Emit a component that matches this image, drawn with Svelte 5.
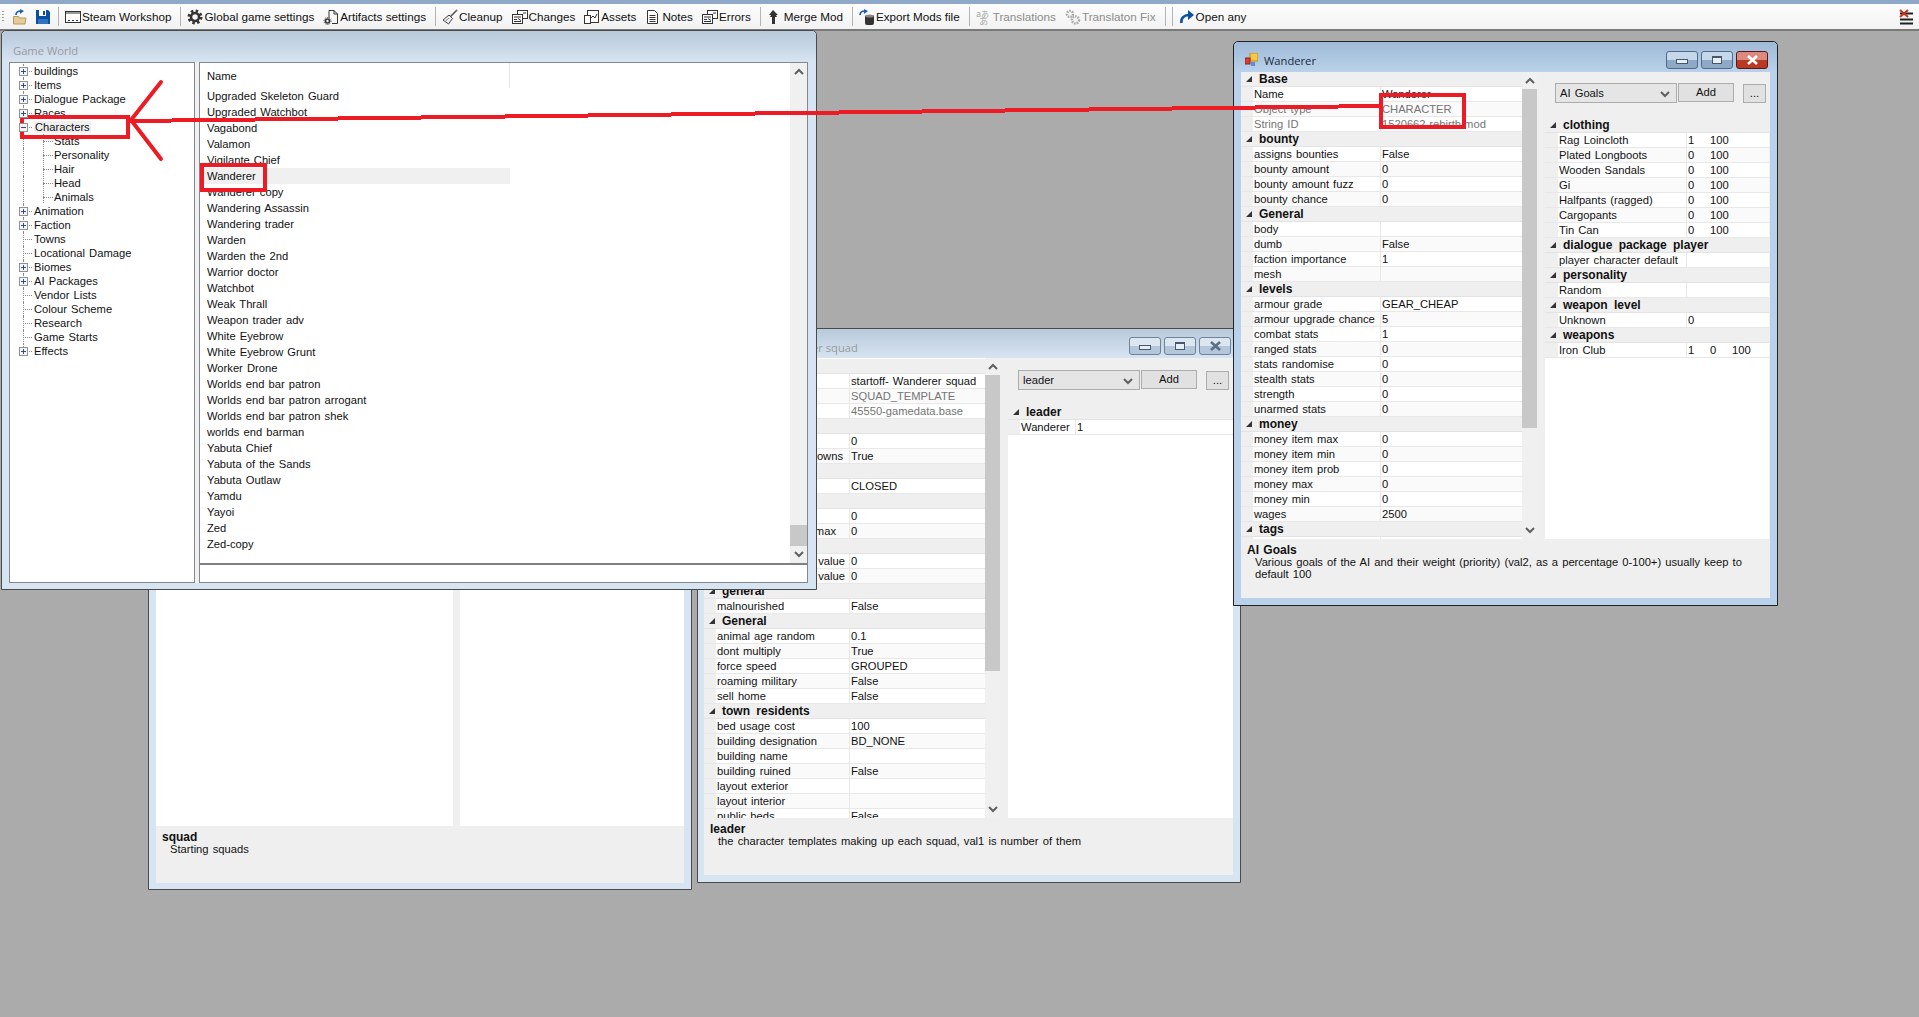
<script>
  const g = '#333';
  const icons = {
    open: `<path d="M1.500 7.500h5l1 1.500h6.500l-1 6h-11.500z" fill="#e6cb97" stroke="#b8975c"/><path d="M4 6c0-3 2-4 5-4" fill="none" stroke="#1d5fae" stroke-width="1.700"/><path d="M8 0l4 2-4 3z" fill="#1d5fae"/>`,
    save: `<path d="M1 1h12l2 2v12H1z" fill="#0b4f9e"/><rect x="4" y="1" width="7" height="6" fill="#fff"/><rect x="8" y="2" width="2" height="4" fill="#0b4f9e"/><rect x="3" y="10" width="10" height="5" fill="#2f73bd"/>`,
    workshop: `<rect x=".5" y="2.500" width="15" height="11" fill="#fff" stroke="${g}"/><rect x="1" y="3" width="14" height="2" fill="#999"/><path d="M3 11.500h2M7 11.500h2M11 11.500h2" stroke="${g}"/>`,
    gear: `<circle cx="8" cy="8" r="6" fill="none" stroke="${g}" stroke-width="3" stroke-dasharray="2.400 2.300"/><circle cx="8" cy="8" r="4" fill="none" stroke="${g}" stroke-width="2.500"/>`,
    artifacts: `<path d="M6 9V1.500h5l3.500 3.500v9.500H9" fill="none" stroke="${g}"/><path d="M11 1.500v3.500h3.500" fill="none" stroke="${g}"/><circle cx="4.500" cy="12" r="2" fill="none" stroke="${g}" stroke-width="1.600"/><circle cx="4.500" cy="12" r="3.500" fill="none" stroke="${g}" stroke-dasharray="1 1.200"/>`,
    broom: `<path d="M15 1 8 8" stroke="#555" stroke-width="1.600"/><path d="M7 6l3.500 3.500-4 5.500-5.500-4z" fill="#eee" stroke="#444"/><path d="M3.500 12 7 9" stroke="#888"/>`,
    changes: `<rect x="5.500" y="1.500" width="10" height="8" fill="#fff" stroke="${g}"/><rect x=".5" y="5.500" width="10" height="9" fill="#fff" stroke="${g}"/><path d="M2 8h7M2 10.500h3M2 12.500h7M11 4h3" stroke="${g}"/><path d="M6 9.500l3 2" stroke="${g}"/>`,
    assets: `<rect x="3.500" y="1.500" width="11" height="12" fill="#fff" stroke="${g}"/><rect x=".5" y="6.500" width="6" height="8" fill="#fff" stroke="${g}"/><path d="M6 10l3-3 2 2 2-4" fill="none" stroke="${g}"/>`,
    notes: `<path d="M2.500 1.500h7l3 3v10h-10z" fill="#fff" stroke="${g}"/><path d="M4.500 6.500h6M4.500 8.500h6M4.500 10.500h6M4.500 12.500h6" stroke="${g}"/>`,
    merge: `<path d="M6 1 2 6h2l-1 2h2v7h3V8h2L9 6h2z" fill="${g}"/>`,
    export: `<path d="M1 6c0-3 2-4 5-4" fill="none" stroke="#1d5fae" stroke-width="1.700"/><path d="M5 0l4 2-4 3z" fill="#1d5fae"/><rect x="6" y="6" width="9" height="10" rx="2" fill="#333"/><ellipse cx="10.500" cy="7" rx="4" ry="1.500" fill="#888"/>`,
    translate: `<text x="0" y="8" font-size="9" fill="#aaa" font-family="'Noto Sans CJK JP',sans-serif">a</text><text x="5" y="8" font-size="8" fill="#aaa" font-family="'Noto Sans CJK JP',sans-serif">あ</text><text x="3" y="16" font-size="9" fill="#aaa" font-family="'Noto Sans CJK JP',sans-serif">あ</text>`,
    fix: `<circle cx="5" cy="5" r="3" fill="none" stroke="#aaa" stroke-width="2.500" stroke-dasharray="1.600 1"/><circle cx="10.500" cy="11" r="3.500" fill="none" stroke="#aaa" stroke-width="2.500" stroke-dasharray="1.600 1"/>`,
    any: `<path d="M2.500 14c-1-5 3-8 7-8" fill="none" stroke="#0d4fa0" stroke-width="2.600"/><path d="M9 1l6 5-6 5z" fill="#0d4fa0"/>`
  };

  const tools = [
    { icon: 'open' }, { icon: 'save' }, { sep: true },
    { icon: 'workshop', label: 'Steam Workshop' }, { sep: true },
    { icon: 'gear', label: 'Global game settings' },
    { icon: 'artifacts', label: 'Artifacts settings' }, { sep: true },
    { icon: 'broom', label: 'Cleanup' },
    { icon: 'changes', label: 'Changes' },
    { icon: 'assets', label: 'Assets' },
    { icon: 'notes', label: 'Notes' },
    { icon: 'changes', label: 'Errors' }, { sep: true },
    { icon: 'merge', label: 'Merge Mod' }, { sep: true },
    { icon: 'export', label: 'Export Mods file' }, { sep: true },
    { icon: 'translate', label: 'Translations', off: true },
    { icon: 'fix', label: 'Translaton Fix', off: true }, { sep: true }, { sep: true },
    { icon: 'any', label: 'Open any' }
  ];

  const tree = [
    { t: 'buildings', box: '+' }, { t: 'Items', box: '+' }, { t: 'Dialogue Package', box: '+' },
    { t: 'Races', box: '+' }, { t: 'Characters', box: '-', on: true },
    { t: 'Stats', child: true }, { t: 'Personality', child: true }, { t: 'Hair', child: true },
    { t: 'Head', child: true }, { t: 'Animals', child: true, end: true },
    { t: 'Animation', box: '+' }, { t: 'Faction', box: '+' }, { t: 'Towns' },
    { t: 'Locational Damage' }, { t: 'Biomes', box: '+' }, { t: 'AI Packages', box: '+' },
    { t: 'Vendor Lists' }, { t: 'Colour Scheme' }, { t: 'Research' }, { t: 'Game Starts' },
    { t: 'Effects', box: '+', last: true }
  ];

  const names = [
    'Upgraded Skeleton Guard', 'Upgraded Watchbot', 'Vagabond', 'Valamon', 'Vigilante Chief',
    'Wanderer', 'Wanderer copy', 'Wandering Assassin', 'Wandering trader', 'Warden',
    'Warden the 2nd', 'Warrior doctor', 'Watchbot', 'Weak Thrall', 'Weapon trader adv',
    'White Eyebrow', 'White Eyebrow Grunt', 'Worker Drone', 'Worlds end bar patron',
    'Worlds end bar patron arrogant', 'Worlds end bar patron shek', 'worlds end barman',
    'Yabuta Chief', 'Yabuta of the Sands', 'Yabuta Outlaw', 'Yamdu', 'Yayoi', 'Zed', 'Zed-copy'
  ];

  const character = [
    { title: 'Base', rows: [
      { l: 'Name', v: ['Wanderer'] },
      { l: 'Object type', v: ['CHARACTER'], ro: true },
      { l: 'String ID', v: ['1520662-rebirth.mod'], ro: true }
    ] },
    { title: 'bounty', rows: [
      { l: 'assigns bounties', v: ['False'] }, { l: 'bounty amount', v: ['0'] },
      { l: 'bounty amount fuzz', v: ['0'] }, { l: 'bounty chance', v: ['0'] }
    ] },
    { title: 'General', rows: [
      { l: 'body', v: [''] }, { l: 'dumb', v: ['False'] },
      { l: 'faction importance', v: ['1'] }, { l: 'mesh', v: [''] }
    ] },
    { title: 'levels', rows: [
      { l: 'armour grade', v: ['GEAR_CHEAP'] }, { l: 'armour upgrade chance', v: ['5'] },
      { l: 'combat stats', v: ['1'] }, { l: 'ranged stats', v: ['0'] },
      { l: 'stats randomise', v: ['0'] }, { l: 'stealth stats', v: ['0'] },
      { l: 'strength', v: ['0'] }, { l: 'unarmed stats', v: ['0'] }
    ] },
    { title: 'money', rows: [
      { l: 'money item max', v: ['0'] }, { l: 'money item min', v: ['0'] },
      { l: 'money item prob', v: ['0'] }, { l: 'money max', v: ['0'] },
      { l: 'money min', v: ['0'] }, { l: 'wages', v: ['2500'] }
    ] },
    { title: 'tags', rows: [{ l: 'trader', v: ['False'] }] }
  ];

  const goals = [
    { title: 'clothing', rows: [
      { l: 'Rag Loincloth', v: ['1', '100'] }, { l: 'Plated Longboots', v: ['0', '100'] },
      { l: 'Wooden Sandals', v: ['0', '100'] }, { l: 'Gi', v: ['0', '100'] },
      { l: 'Halfpants (ragged)', v: ['0', '100'] }, { l: 'Cargopants', v: ['0', '100'] },
      { l: 'Tin Can', v: ['0', '100'] }
    ] },
    { title: 'dialogue package player', rows: [{ l: 'player character default', v: [''] }] },
    { title: 'personality', rows: [{ l: 'Random', v: [''] }] },
    { title: 'weapon level', rows: [{ l: 'Unknown', v: ['0'] }] },
    { title: 'weapons', rows: [{ l: 'Iron Club', v: ['1', '0', '100'] }] }
  ];

  const squad = [
    { title: 'Base', rows: [
      { l: 'Name', v: ['startoff- Wanderer squad'] },
      { l: 'Object type', v: ['SQUAD_TEMPLATE'], ro: true },
      { l: 'String ID', v: ['45550-gamedata.base'], ro: true }
    ] },
    { title: '', rows: [{ l: '', v: ['0'] }, { l: 'owns', v: ['True'], pad: 6 }] },
    { title: '', rows: [{ l: '', v: ['CLOSED'] }] },
    { title: '', rows: [{ l: '', v: ['0'] }, { l: 'max', v: ['0'], pad: 13 }] },
    { title: '', rows: [{ l: 'value', v: ['0'], pad: 4 }, { l: 'value', v: ['0'], pad: 4 }] },
    { title: 'general', rows: [{ l: 'malnourished', v: ['False'] }] },
    { title: 'General', rows: [
      { l: 'animal age random', v: ['0.1'] }, { l: 'dont multiply', v: ['True'] },
      { l: 'force speed', v: ['GROUPED'] }, { l: 'roaming military', v: ['False'] },
      { l: 'sell home', v: ['False'] }
    ] },
    { title: 'town residents', rows: [
      { l: 'bed usage cost', v: ['100'] }, { l: 'building designation', v: ['BD_NONE'] },
      { l: 'building name', v: [''] }, { l: 'building ruined', v: ['False'] },
      { l: 'layout exterior', v: [''] }, { l: 'layout interior', v: [''] },
      { l: 'public beds', v: ['False'] }
    ] }
  ];

  const leader = [{ title: 'leader', rows: [{ l: 'Wanderer', v: ['1'] }] }];
</script>

{#snippet chevron(up)}
  <svg class="chev" width="10" height="7" viewBox="0 0 10 7">
    <path d={up ? 'M1 6l4-4 4 4' : 'M1 1l4 4 4-4'} fill="none" stroke="#606060" stroke-width="2" />
  </svg>
{/snippet}

{#snippet scrollbar(kind)}
  <div class="sb {kind}">
    <div class="sb-arrow">{@render chevron(true)}</div>
    <div class="thumb"></div>
    <div class="sb-arrow down">{@render chevron(false)}</div>
  </div>
{/snippet}

{#snippet caption(active)}
  <div class="caps" class:active>
    <span class="cap"><i class="min"></i></span>
    <span class="cap"><i class="max"></i></span>
    <span class="cap close">
      <svg width="13" height="10" viewBox="0 0 13 10">
        <path d="M2 1l9 8M11 1l-9 8" stroke={active ? '#fff' : '#5d6f82'} stroke-width="2.600" />
      </svg>
    </span>
  </div>
{/snippet}

{#snippet grid(sections, kind)}
  <div class="grid {kind}">
    {#each sections as sec}
      <div class="sec"><i class="tri"></i><b>{sec.title}</b></div>
      {#each sec.rows as row, i}
        <div class="row" class:ro={row.ro} class:alt={i % 2 === 1}>
          <span class="gut"></span>
          <span class="lab" class:cut={row.pad} style={row.pad ? `padding-right:${row.pad}px` : undefined}>{row.l}</span>
          <span class="val">
            {#each row.v as v}<span class="cell">{v}</span>{/each}
          </span>
        </div>
      {/each}
    {/each}
  </div>
{/snippet}

{#snippet addRow(value)}
  <div class="form">
    <div class="combo"><span>{value}</span>{@render chevron(false)}</div>
    <button class="add">Add</button>
    <button class="more">...</button>
  </div>
{/snippet}

<div class="desktop">
  <div class="strip"></div>
  <div class="toolbar">
    <span class="grip"></span>
    {#each tools as tool}
      {#if tool.sep}
        <span class="sep"></span>
      {:else}
        <span class="tool" class:off={tool.off} class:solo={!tool.label}>
          <svg width="16" height="16" viewBox="0 0 16 16">{@html icons[tool.icon]}</svg>
          {#if tool.label}<span>{tool.label}</span>{/if}
        </span>
      {/if}
    {/each}
    <svg class="close-all" width="14" height="16" viewBox="0 0 14 16">
      <path d="M1 4.500h13M1 10.500h13M1 14.500h13" stroke="#222" stroke-width="2" />
      <path d="M1 1l8 7M9 1L1 8" stroke="#c8321e" stroke-width="2" />
    </svg>
  </div>

  <section class="win back">
    <div class="title"></div>
    <div class="panels">
      <div class="pane"></div>
      <div class="pane"></div>
    </div>
    <div class="info">
      <b>squad</b>
      <p>Starting squads</p>
    </div>
  </section>

  <section class="win mid">
    <div class="title"><span class="title-text">startoff- Wanderer squad</span>{@render caption(false)}</div>
    <div class="main">
      {@render grid(squad, 'squad')}
      {@render scrollbar('sb-squad')}
      <div class="side">
        {@render addRow('leader')}
        {@render grid(leader, 'leader')}
      </div>
    </div>
    <div class="info">
      <b>leader</b>
      <p>the character templates making up each squad, val1 is number of them</p>
    </div>
  </section>

  <section class="win wanderer">
    <div class="title">
      <svg class="app" width="13" height="13" viewBox="0 0 13 13">
        <rect x="5" y="0" width="8" height="8" fill="#f6c945" stroke="#b98a1d" />
        <rect x="0" y="5" width="5" height="6" fill="#d8412f" stroke="#8f2318" />
        <rect x="6" y="9" width="4" height="4" fill="#5b8fd8" />
      </svg>
      <span class="title-text">Wanderer</span>
      {@render caption(true)}
    </div>
    <div class="main">
      {@render grid(character, 'character')}
      {@render scrollbar('sb-char')}
      <div class="side">
        {@render addRow('AI Goals')}
        {@render grid(goals, 'goals')}
      </div>
    </div>
    <div class="info">
      <b>AI Goals</b>
      <p>Various goals of the AI and their weight (priority) (val2, as a percentage 0-100+) usually keep to default 100</p>
    </div>
  </section>

  <section class="win world">
    <div class="title"><span class="title-text">Game World</span></div>
    <div class="world-body">
      <div class="tree">
        {#each tree as node}
          <div class="node" class:child={node.child} class:last={node.last} class:end={node.end}>
            {#if node.box}<i class="box" class:minus={node.box === '-'}></i>{/if}
            <span class:on={node.on}>{node.t}</span>
          </div>
        {/each}
      </div>
      <div class="listwrap">
        <div class="listbody">
          <div class="list">
            <div class="head"><span>Name</span></div>
            {#each names as name, i}
              <div class="item" class:sel={i === 5}>{name}</div>
            {/each}
          </div>
          {@render scrollbar('sb-list')}
        </div>
        <div class="status"></div>
      </div>
    </div>
  </section>

  <svg class="marks" width="1919" height="1017" viewBox="0 0 1919 1017">
    <g fill="none" stroke="#ed1c24" stroke-width="4">
      <rect x="22" y="117" width="106" height="20" />
      <rect x="202" y="165" width="63" height="25" />
      <rect x="1381" y="95" width="83" height="32" />
      <path d="M130 121 1381 106" stroke-width="4" shape-rendering="crispEdges" />
      <path d="M161 82 131 120 161 159" stroke-linecap="round" />
    </g>
  </svg>
</div>

<style>
  :global(body) {
    margin: 0;
  }

  .desktop {
    position: relative;
    width: 1919px;
    height: 1017px;
    overflow: hidden;
    background: #ababab;
    font-family: "Liberation Sans", sans-serif;
    font-size: 11.2px;
    word-spacing: 1px;
    color: #111;
  }

  .strip {
    height: 4px;
    background: #8fa8c8;
  }

  .toolbar {
    display: flex;
    align-items: center;
    height: 25px;
    background: linear-gradient(#fdfdfd, #f2f2f2);
    border-bottom: 2px solid #7a7a7a;
    padding-left: 2px;
    font-size: 11.7px;
    word-spacing: 0;
  }

  .grip {
    width: 2px;
    height: 12px;
    margin-right: 8px;
    background: repeating-linear-gradient(#9a9a9a 0 1px, transparent 1px 3px);
  }

  .tool {
    display: flex;
    align-items: center;
    gap: 1px;
    margin-right: 9px;
    white-space: nowrap;
  }

  .tool.solo {
    margin-right: 7px;
  }

  .tool.off {
    color: #8c8c8c;
  }

  .sep {
    width: 1px;
    height: 19px;
    margin-right: 6px;
    background: #b4b4b4;
  }

  .close-all {
    margin-left: auto;
    margin-right: 6px;
  }

  /* windows float on the desktop */
  .win {
    position: absolute;
    display: flex;
    flex-direction: column;
    box-sizing: border-box;
    border: 1px solid #4a4a4a;
    border-radius: 5px 5px 0 0;
    padding: 0 7px 7px;
    background: #d7e4f2;
  }

  .title {
    display: flex;
    align-items: center;
    flex: none;
    box-sizing: border-box;
    margin: 0 -7px;
    padding: 0 7px;
    border-radius: 5px 5px 0 0;
    background: linear-gradient(#b8c9da, #d7e4f2);
    color: #9a9a9a;
    font-family: "Open Sans", sans-serif;
    font-size: 11.2px;
    word-spacing: 0;
  }

  .title-text {
    margin-top: 7px;
  }

  .back {
    left: 148px;
    top: 340px;
    width: 544px;
    height: 550px;
    padding-bottom: 6px;
  }

  .back .title {
    height: 30px;
  }

  .panels {
    flex: 1;
    display: flex;
    gap: 7px;
    background: #efefef;
  }

  .pane {
    flex: 297;
    background: #fff;
  }

  .pane + .pane {
    flex: 224;
  }

  .mid {
    left: 697px;
    top: 328px;
    width: 544px;
    height: 555px;
    padding-left: 6px;
  }

  .mid .title {
    height: 29px;
    margin-left: -6px;
    padding-left: 28px;
  }

  .wanderer {
    left: 1233px;
    top: 41px;
    width: 545px;
    height: 565px;
    background: #b9d1ea;
    border-color: #222;
  }

  .wanderer .title {
    height: 30px;
    background: linear-gradient(#9fbbd7, #b9d1ea);
    color: #1a2a3a;
    padding-left: 11px;
  }

  .app {
    margin: 5px 6px 0 0;
  }

  .caps {
    display: flex;
    gap: 3px;
    margin-left: auto;
    margin-right: 2px;
    margin-top: 5px;
  }

  .cap {
    display: flex;
    align-items: center;
    justify-content: center;
    box-sizing: border-box;
    width: 32px;
    height: 18px;
    border: 1px solid #6f8299;
    border-radius: 3px;
    background: linear-gradient(#dbe6f1 0 50%, #b3c6da 50% 100%);
  }

  .active .cap {
    border-color: #51688a;
    background: linear-gradient(#c5d8ea 0 50%, #8ea9c6 50% 100%);
  }

  .active .close {
    border-color: #5a1620;
    background: linear-gradient(#dc8a7f 0 50%, #b83a22 50% 100%);
  }

  .min {
    width: 10px;
    height: 3px;
    margin-top: 3px;
    border: 1px solid #46586e;
    background: #e8eef5;
  }

  .max {
    width: 8px;
    height: 5px;
    border: 1px solid #46586e;
    border-top-width: 2px;
    background: #e8eef5;
  }

  .main {
    flex: 1;
    min-height: 0;
    display: flex;
    background: #efefef;
  }

  .info {
    flex: none;
    box-sizing: border-box;
    padding: 5px 6px 0;
    background: #efefef;
    line-height: 12px;
  }

  .info b {
    font-size: 12px;
  }

  .back .info {
    height: 57px;
  }

  .mid .info {
    height: 57px;
  }

  .wanderer .info {
    height: 59px;
  }

  .info p {
    margin: 0;
    padding: 0 12px 0 8px;
  }

  /* property grids */
  .grid {
    overflow: hidden;
    background: #fff;
  }

  .character {
    width: 281px;
  }

  .squad {
    width: 281px;
    padding-top: 1px;
  }

  .sec {
    display: flex;
    align-items: center;
    box-sizing: border-box;
    height: 15px;
    background: #efefef;
    border-bottom: 1px solid #e3e3e3;
  }

  .sec b {
    font-size: 12px;
    word-spacing: 3px;
  }

  .tri {
    width: 0;
    height: 0;
    margin-left: 5px;
    margin-right: 7px;
    border-left: 6px solid transparent;
    border-bottom: 6px solid #333;
  }

  .row {
    display: grid;
    grid-template-columns: 12px 127px 1fr;
    box-sizing: border-box;
    height: 15px;
    line-height: 14px;
    border-bottom: 1px solid #e8e8e8;
    white-space: nowrap;
  }

  .row.alt {
    background: #fafafa;
  }

  .row.ro {
    color: #757575;
  }

  .squad .row {
    grid-template-columns: 12px 133px 1fr;
  }

  .goals .row {
    grid-template-columns: 13px 128px 1fr;
  }

  .leader .row {
    grid-template-columns: 12px 55px 1fr;
  }

  .gut {
    background: #efefef;
  }

  .lab {
    padding-left: 1px;
    overflow: hidden;
  }

  .lab.cut {
    text-align: right;
  }

  .val {
    display: flex;
    border-left: 1px solid #e8e8e8;
    padding-left: 1px;
  }

  .cell {
    min-width: 22px;
  }

  .side {
    flex: 1;
    min-width: 0;
    display: flex;
    flex-direction: column;
    padding-left: 8px;
  }

  .side .grid {
    flex: 1;
  }

  .goals {
    margin-right: 1px;
  }

  .form {
    display: flex;
    align-items: flex-start;
    flex: none;
    box-sizing: border-box;
    height: 46px;
    padding: 11px 0 0 10px;
  }

  .mid .form {
    height: 47px;
    padding-top: 12px;
  }

  .combo {
    display: flex;
    align-items: center;
    justify-content: space-between;
    box-sizing: border-box;
    width: 122px;
    height: 20px;
    padding: 0 6px 0 4px;
    background: #e5e5e5;
    border: 1px solid #acacac;
  }

  .combo .chev {
    margin-top: 2px;
  }

  button {
    box-sizing: border-box;
    height: 19px;
    padding: 0;
    font: inherit;
    color: #111;
    background: #e1e1e1;
    border: 1px solid #adadad;
    line-height: 15px;
  }

  .add {
    width: 56px;
    margin-left: 1px;
  }

  .more {
    width: 23px;
    margin-left: 9px;
    margin-top: 1px;
  }

  /* scrollbars */
  .sb {
    flex: none;
    display: flex;
    flex-direction: column;
    width: 15px;
    background: #f0f0f0;
  }

  .sb-arrow {
    display: flex;
    align-items: center;
    justify-content: center;
    height: 17px;
    flex: none;
  }

  .sb-arrow.down {
    margin-top: auto;
  }

  .thumb {
    flex: none;
    background: #c8c8c8;
  }

  .sb-char .thumb {
    height: 339px;
  }

  .sb-squad .thumb {
    height: 296px;
  }

  .sb-list {
    width: 17px;
  }

  .sb-list .thumb {
    height: 21px;
    margin-top: auto;
  }

  .sb-list .sb-arrow.down {
    margin-top: 0;
  }

  /* game world */
  .world {
    left: 1px;
    top: 30px;
    width: 816px;
    height: 560px;
    background: #d7e4f2;
    padding-bottom: 6px;
  }

  .world .title {
    height: 31px;
    padding-left: 11px;
  }

  .world-body {
    flex: 1;
    min-height: 0;
    display: flex;
    gap: 4px;
    margin-right: 1px;
    background: #f0f0f0;
  }

  .tree {
    box-sizing: border-box;
    width: 186px;
    padding-top: 1px;
    border: 1px solid #828790;
    background: #fff;
  }

  .node {
    position: relative;
    height: 14px;
    line-height: 14px;
    padding-left: 24px;
    white-space: nowrap;
  }

  .node::before {
    content: '';
    position: absolute;
    left: 13px;
    top: 0;
    bottom: 0;
    border-left: 1px dotted #8a8a8a;
  }

  .node.last::before {
    bottom: 7px;
  }

  .node::after {
    content: '';
    position: absolute;
    left: 13px;
    top: 7px;
    width: 9px;
    border-top: 1px dotted #8a8a8a;
  }

  .node.child {
    padding-left: 44px;
    background: linear-gradient(#8a8a8a 50%, transparent 50%) 33px 0 / 1px 2px repeat-y;
  }

  .node.child::after {
    left: 33px;
    width: 10px;
  }

  .on {
    background: #f0f0f0;
    padding: 0 1px;
  }

  .box {
    position: absolute;
    z-index: 1;
    left: 9px;
    top: 3px;
    box-sizing: border-box;
    width: 9px;
    height: 9px;
    border: 1px solid #919191;
    background:
      linear-gradient(#2a4d9b, #2a4d9b) center / 5px 1px no-repeat,
      linear-gradient(#2a4d9b, #2a4d9b) center / 1px 5px no-repeat,
      #f6f6f6;
  }

  .box.minus {
    background:
      linear-gradient(#2a4d9b, #2a4d9b) center / 5px 1px no-repeat,
      #f6f6f6;
  }

  .listwrap {
    box-sizing: border-box;
    flex: 1;
    min-width: 0;
    display: flex;
    flex-direction: column;
    border: 1px solid #828790;
    background: #fff;
  }

  .listbody {
    flex: 1;
    min-height: 0;
    display: flex;
    border-bottom: 2px solid #808080;
  }

  .list {
    flex: 1;
    min-width: 0;
  }

  .head {
    box-sizing: border-box;
    width: 310px;
    height: 25px;
    padding: 1px 0 0 7px;
    line-height: 24px;
    border-right: 1px solid #e5e5e5;
  }

  .item {
    box-sizing: border-box;
    width: 310px;
    height: 16px;
    padding-left: 7px;
    line-height: 16px;
    white-space: nowrap;
  }

  .item.sel {
    background: #f0f0f0;
  }

  .status {
    flex: none;
    height: 17px;
  }

  .marks {
    position: absolute;
    left: 0;
    top: 0;
    pointer-events: none;
  }
</style>
